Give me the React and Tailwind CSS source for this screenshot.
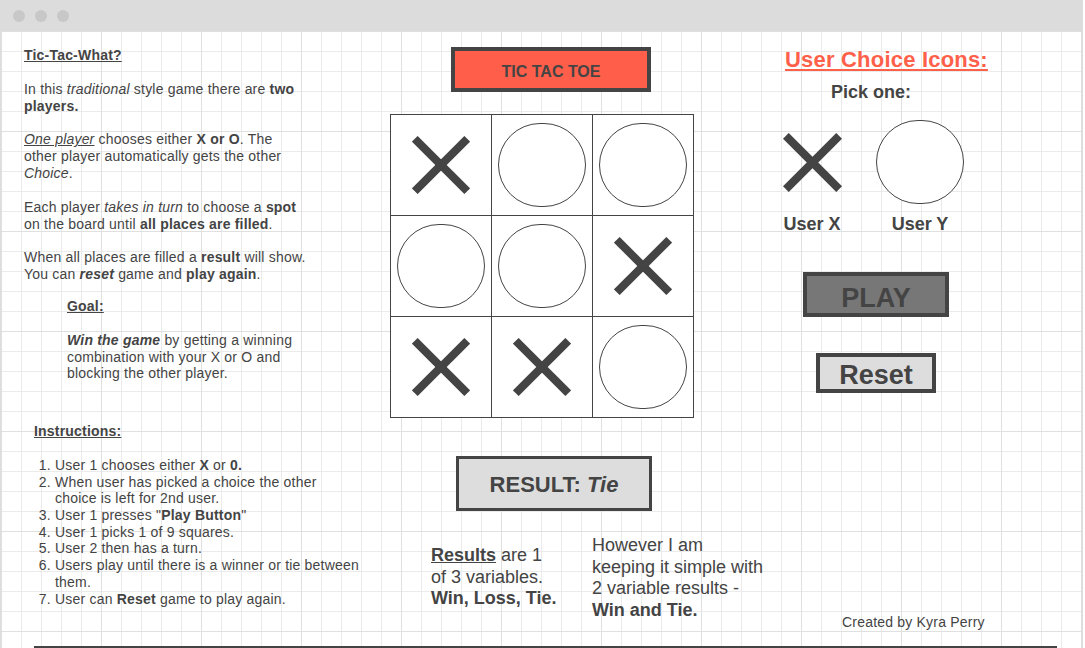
import React from 'react'

const ink = 'text-[#444]'

const Cross = ({ size = 58 }) => (
  <svg width={size} height={size} viewBox="0 0 58 58" aria-hidden>
    <line x1="2.8" y1="2.8" x2="55.2" y2="55.2" stroke="#444" strokeWidth="8" />
    <line x1="55.2" y1="2.8" x2="2.8" y2="55.2" stroke="#444" strokeWidth="8" />
  </svg>
)

const Ring = () => <div className="h-[84px] w-[88px] rounded-full border border-[#444] bg-white" />

const board = ['x', 'o', 'o', 'o', 'o', 'x', 'x', 'x', 'o']

const TitleBar = () => (
  <div className="flex h-[31px] items-center gap-[10px] bg-[#dcdcdc] pl-[13px]">
    <span className="h-[12px] w-[12px] rounded-full bg-[#c8c8c8]" />
    <span className="h-[12px] w-[12px] rounded-full bg-[#c8c8c8]" />
    <span className="h-[12px] w-[12px] rounded-full bg-[#c8c8c8]" />
  </div>
)

const AboutColumn = () => (
  <div className="w-[389px] shrink-0 pl-[23px] pt-[16px] text-[14px] leading-[16.8px] tracking-[0.2px] whitespace-nowrap">
    <p className="font-bold underline">Tic-Tac-What?</p>
    <p className="mt-[17px]">
      In this <i>traditional</i> style game there are <b>two</b>
      <br />
      <b>players.</b>
    </p>
    <p className="mt-[17px]">
      <i className="underline">One player</i> chooses either <b>X or O</b>. The
      <br />
      other player automatically gets the other
      <br />
      <i>Choice</i>.
    </p>
    <p className="mt-[17px]">
      Each player <i>takes in turn</i> to choose a <b>spot</b>
      <br />
      on the board until <b>all places are filled</b>.
    </p>
    <p className="mt-[17px]">
      When all places are filled a <b>result</b> will show.
      <br />
      You can <b><i>reset</i></b> game and <b>play again</b>.
    </p>
    <div className="ml-[43px]">
      <p className="mt-[15px] font-bold underline">Goal:</p>
      <p className="mt-[17px]">
        <b><i>Win the game</i></b> by getting a winning
        <br />
        combination with your X or O and
        <br />
        blocking the other player.
      </p>
    </div>
    <div className="ml-[10px]">
      <p className="mt-[41px] font-bold underline">Instructions:</p>
      <ol className="mt-[17px] list-decimal pl-[21px] leading-[16.7px]">
        <li>
          User 1 chooses either <b>X</b> or <b>0.</b>
        </li>
        <li>
          When user has picked a choice the other
          <br />
          choice is left for 2nd user.
        </li>
        <li>
          User 1 presses "<b>Play Button</b>"
        </li>
        <li>User 1 picks 1 of 9 squares.</li>
        <li>User 2 then has a turn.</li>
        <li>
          Users play until there is a winner or tie between
          <br />
          them.
        </li>
        <li>
          User can <b>Reset</b> game to play again.
        </li>
      </ol>
    </div>
  </div>
)

const GameColumn = () => (
  <div className="w-[304px] shrink-0 pt-[16px]">
    <div className="ml-[61px] h-[45px] w-[200px] border-4 border-[#444] bg-[#ff5f4a] pt-[13px] text-center text-[16px] leading-none font-bold">
      TIC TAC TOE
    </div>
    <div className="mt-[22px] grid h-[304px] w-[304px] grid-cols-3 gap-px bg-[#444] p-px">
      {board.map((cell, i) => (
        <div key={i} className="flex items-center justify-center bg-white">
          {cell === 'x' ? <Cross /> : <Ring />}
        </div>
      ))}
    </div>
    <div className="mt-[38px] ml-[66px] h-[55px] w-[196px] border-[3px] border-[#444] bg-[#dddddd] pt-[15px] text-center text-[22px] leading-none font-bold">
      RESULT: <i>Tie</i>
    </div>
    <div className="mt-[24px] ml-[41px] flex text-[18px] leading-[21.7px] whitespace-nowrap">
      <p className="mt-[10px] w-[161px] shrink-0">
        <b className="underline">Results</b> are 1
        <br />
        of 3 variables.
        <br />
        <b>Win, Loss, Tie.</b>
      </p>
      <p>
        However I am
        <br />
        keeping it simple with
        <br />
        2 variable results -
        <br />
        <b>Win and Tie.</b>
      </p>
    </div>
  </div>
)

const ChoiceColumn = () => (
  <div className="flex flex-1 flex-col items-start pl-[91px] pt-[17px] pb-[15px]">
    <p className="text-[22px] leading-[24px] tracking-[0.2px] font-bold text-[#ff604a] underline whitespace-nowrap">User Choice Icons:</p>
    <p className="mt-[9px] ml-[46px] text-[18px] leading-[22px] font-bold">Pick one:</p>
    <div className="mt-[17px] -ml-[3px] flex gap-[34px] text-[18px] leading-[22px] font-bold">
      <div className="flex w-[60px] flex-col items-center">
        <div className="flex h-[84px] items-center">
          <Cross size={59} />
        </div>
        <span className="mt-[9px] whitespace-nowrap">User X</span>
      </div>
      <div className="flex w-[88px] flex-col items-center">
        <Ring />
        <span className="mt-[9px] whitespace-nowrap">User Y</span>
      </div>
    </div>
    <button className="mt-[37px] ml-[18px] h-[45px] w-[146px] border-4 border-[#444] bg-[#777777] text-center text-[27px] leading-none font-bold text-[#444]">
      <span className="block pt-[8px]">PLAY</span>
    </button>
    <button className="mt-[36px] ml-[31px] h-[40px] w-[120px] border-4 border-[#444] bg-[#dddddd] text-center text-[27px] leading-none font-bold text-[#444]">
      <span className="block pt-[5px]">Reset</span>
    </button>
    <p className="mt-auto ml-[57px] text-[14px] leading-[16.8px] tracking-[0.2px] whitespace-nowrap">Created by Kyra Perry</p>
  </div>
)

export default function App() {
  return (
    <div className={`h-[648px] w-full overflow-hidden bg-white font-['Liberation_Sans',Arial,sans-serif] ${ink}`}>
      <div className="w-[1083px]">
        <TitleBar />
        <div className="flex h-[617px] flex-col border-r-2 border-l border-[#dddddd] bg-[linear-gradient(to_right,#e0e0e0_1px,transparent_1px),linear-gradient(to_bottom,#e0e0e0_1px,transparent_1px),linear-gradient(to_right,#ebebeb_1px,transparent_1px),linear-gradient(to_bottom,#ebebeb_1px,transparent_1px)] bg-size-[100px_100px,100px_100px,20px_20px,20px_20px]">
          <div className="flex h-[615px]">
            <AboutColumn />
            <GameColumn />
            <ChoiceColumn />
          </div>
          <div className="ml-[33px] h-[2px] w-[1023px] bg-[#444]" />
        </div>
      </div>
    </div>
  )
}
